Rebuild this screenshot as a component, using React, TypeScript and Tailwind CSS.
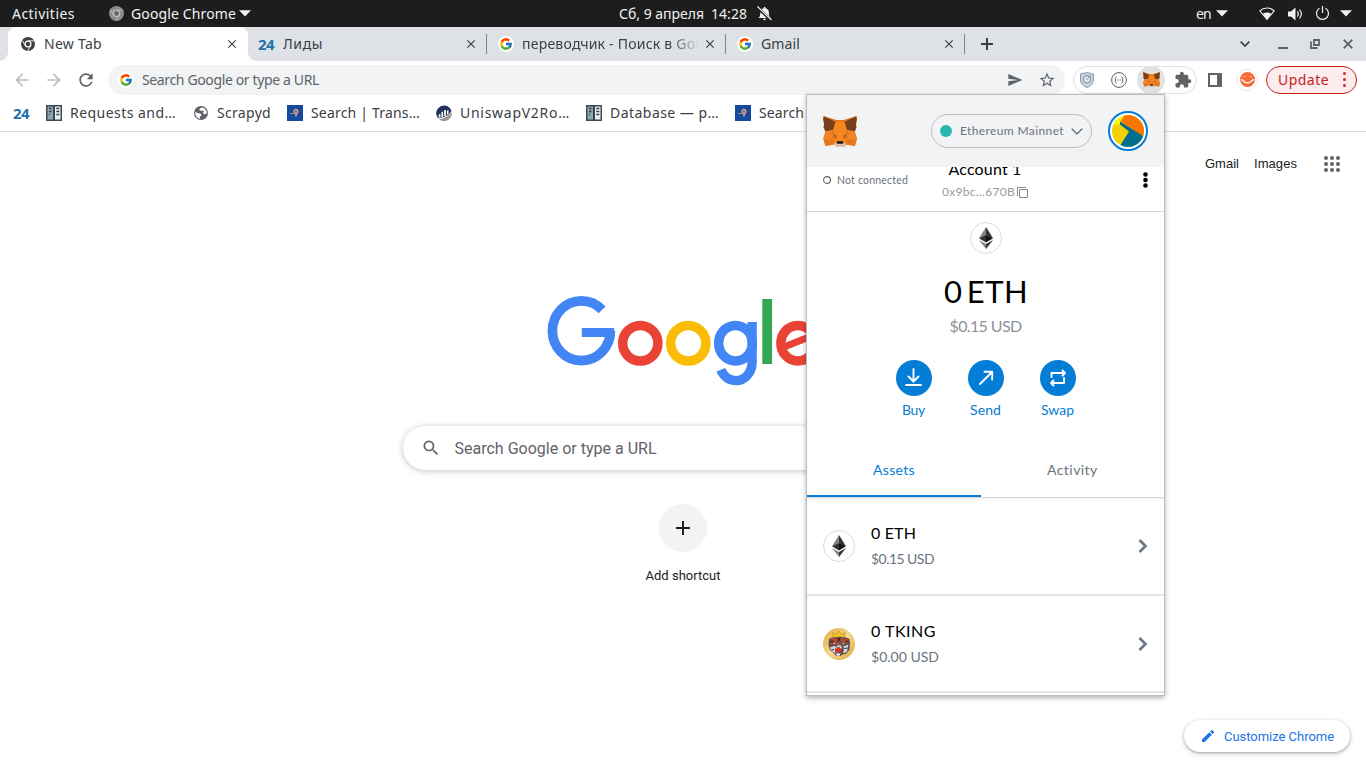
import { useLayoutEffect, useRef, useState } from "react";
import type { ReactNode } from "react";
import { FcGoogle } from "react-icons/fc";
import { MdArrowBack, MdArrowForward, MdClose, MdEdit, MdExtension, MdRefresh, MdSearch, MdSend, MdStarBorder } from "react-icons/md";

/* A single line of text, tracked so that it fills exactly `w` pixels. */
function Line({ w, className = "", children }: { w: number; className?: string; children: string }) {
  const ref = useRef<HTMLSpanElement>(null);
  const [spacing, setSpacing] = useState(0);
  useLayoutEffect(() => {
    if (!ref.current) return;
    const natural = ref.current.getBoundingClientRect().width;
    setSpacing((w - natural) / Math.max(1, children.length));
  }, []);
  return (
    <span className={`block shrink-0 whitespace-pre ${className}`} style={{ width: w }}>
      <span ref={ref} style={{ letterSpacing: spacing }}>{children}</span>
    </span>
  );
}

const Caret = () => (
  <svg width="12" height="7" viewBox="0 0 12 7" className="shrink-0"><path d="M0 .3h12L6 6.5z" fill="#f2f2f2" /></svg>
);

function ChromeMark({ size, ring, gap, core }: { size: number; ring: string; gap: string; core: string }) {
  return (
    <svg width={size} height={size} viewBox="0 0 16 16" className="shrink-0">
      <circle cx="8" cy="8" r="8" fill={ring} />
      <circle cx="8" cy="8" r="4" fill={gap} />
      <circle cx="8" cy="8" r="2.6" fill={core} />
      <path d="M8 4.4h7.2M4.9 9.9L1.3 3.7M11.1 9.8L7.5 16" stroke={gap} strokeWidth="1" />
    </svg>
  );
}

function Fox({ w, h }: { w: number; h: number }) {
  return (
    <svg width={w} height={h} viewBox="0 0 34 31" preserveAspectRatio="none" className="shrink-0">
      <path d="M.5 0L13 5h8L33.500 0l.5 3-1.500 11-.500 2 2 7-2 7-8.500-1.500-2.500 2.500h-7L11 28.500 2.500 30l-2-7 2-7-.5-2L0 3z" fill="#f6851b" />
      <path d="M.8.3L12.500 5.500 10 14l-7.500 1.500L.5 11.500 1.300 7 .2 4zM33.200.3L21.500 5.500 24 14l7.500 1.500 2-4L32.700 7l1.100-3z" fill="#763e1a" />
      <path d="M12.500 5.500L1 .3 13.500 4h7L33 .3 21.500 5.500z" fill="#e2761b" />
      <path d="M2.500 15.500L10 14l3.500 6-6 1.500L0 23zM31.500 15.500L24 14l-3.500 6 6 1.500L34 23z" fill="#f18526" />
      <path d="M10 14l-2.500 4 5 2zM24 14l2.500 4-5 2z" fill="#e0761c" />
      <path d="M.5 23.500L10 23l1 5.500L2.500 30zM33.500 23.500L24 23l-1 5.500 8.500 1.500z" fill="#e4761b" />
      <path d="M8.500 20l5.500.500-1.200 3-2.300-1.500zM25.500 20l-5.500.500 1.200 3 2.300-1.500z" fill="#d96c1b" />
      <path d="M10.500 19l2.800.5.200 1.200-2.200-.4zM23.500 19l-2.800.5-.2 1.200 2.200-.4z" fill="#6b5546" />
      <path d="M11 28l3-2h6l3 2-2.500 3h-7z" fill="#d7c1b3" />
      <path d="M14 25.200h6l.3 2.600h-6.600z" fill="#161616" />
    </svg>
  );
}

const Eth = () => (
  <span className="flex size-8 shrink-0 items-center justify-center rounded-full border border-[#d9dcdf] bg-white">
    <svg width="14" height="22" viewBox="0 0 14 22">
      <path d="M7 0L0 11.200 7 8.200z" fill="#828384" />
      <path d="M7 0v8.200l7 3z" fill="#343434" />
      <path d="M0 11.200l7-3.200v7.400z" fill="#2f3030" />
      <path d="M14 11.200L7 8v7.400z" fill="#131313" />
      <path d="M0 13l7 4.100V22z" fill="#828384" />
      <path d="M14 13l-7 4.100V22z" fill="#343434" />
    </svg>
  </span>
);

const Tiger = () => (
  <svg width="32" height="32" viewBox="0 0 32 32" className="shrink-0">
    <defs>
      <linearGradient id="gold" x1="0" y1="0" x2="1" y2="1">
        <stop offset="0" stopColor="#e3a63c" /><stop offset=".5" stopColor="#f6d994" /><stop offset="1" stopColor="#e2a237" />
      </linearGradient>
    </defs>
    <circle cx="16" cy="16" r="16" fill="url(#gold)" />
    <path d="M10.500 9.500L9.500 4.500l3.500 2 3-3.800L18.500 6.500l3.500-2-.5 5z" fill="#f2c21d" stroke="#a88022" strokeWidth=".5" />
    <path d="M6 11l3-1.500 7-.8 7 .8 3.500 1.500.5 5-.5 6-4 4-3 .5-2 1.500h-4l-2.500-2.500L7 22l-1.500-5z" fill="#5a5052" />
    <path d="M8 11l6-1.500-.5 4.500-5 1.500zM17.500 9.700l7.500 1.500-.5 4-4-.5-3-1.500zM7 16l3 1-1.500 2zM13.500 14.500h4.500l-1 3h-3z" fill="#c2462c" />
    <path d="M7 19.500l4-1.500 2 .5-1 2.500.5 4-3-1zM25.500 16.500l-5 2 .5 3-1 4 4-2zM14 17.500l3.500-.3 1.500 2h-5z" fill="#d6d6dc" />
    <path d="M10 15l3 .5-1.200 1zM22 15.500l-3 .2 1 1z" fill="#fdf3c8" />
    <path d="M12.500 20l6-.5-.5 4-3.500 1.500-2-2z" fill="#dc3324" />
    <path d="M12 19l1.200 2 .8-1.700zM18.800 19l-.8 2-1-1.700zM13 25.500l4.500-.3-1 2.500h-2.500z" fill="#f4f4f4" />
    <path d="M7 13.500l3.500-.5M25.500 13.500l-3.500-.3M14.500 10l1.500 2.500 1-2.500M24.500 20l-3 .5M9 22l2-.5" stroke="#2a2426" strokeWidth="1" fill="none" />
  </svg>
);

const Panels = () => (
  <svg width="16" height="16" viewBox="0 0 16 16" className="shrink-0">
    <path d="M0 0h16v16H0z" fill="#3c4a55" />
    <path d="M1.500 1.500h5.500v13H1.500z" fill="#8fa5b3" /><path d="M9 1.500h5.500v13H9z" fill="#e9eef1" />
    <path d="M3 3.500h2.500M3 6.500h2.500M3 9.500h1M10.300 3.500h3M10.300 6.500h3M10.300 9.500h3M7.800 0v16" stroke="#33414c" strokeWidth="1.300" />
  </svg>
);

const BlueMark = () => (
  <svg width="16" height="16" viewBox="0 0 16 16" className="shrink-0">
    <path d="M0 0h16v16H0z" fill="#154a9f" />
    <path d="M8.800 3.500a3 3 0 0 1 1.800 5.300L9 12.500 7.600 9a3 3 0 0 1 1.200-5.500z" fill="#c39a86" />
    <path d="M3 8.500h4" stroke="#a08a8f" /><circle cx="8.800" cy="6.500" r="1" fill="#705c78" />
  </svg>
);

const Globe = () => (
  <svg width="14" height="14" viewBox="0 0 14 14" className="shrink-0">
    <circle cx="7" cy="7" r="7" fill="#5f6368" />
    <path d="M8.300 1.500L6 2.300 5.300 4l1.500.8 2.200-.3 1 1.200-1.300 1.100 1.600 1.500L13 7.500C13 4.500 11 2.200 8.300 1.500zM1.200 6l3 1.200 2.300.3 1 1.700-1.400 1.300-.3 2.200C3 12.200 1 9.500 1.200 6z" fill="#fff" />
  </svg>
);

const Uniswap = () => (
  <svg width="16" height="16" viewBox="0 0 16 16" className="shrink-0">
    <path d="M1.500 12.500A7.800 7.800 0 1 1 15.500 6L13 9.500 8 12l-5 1.200z" fill="#21325b" />
    <path d="M3 14.200c5-.8 9.500-2.800 12.800-7C16.200 12 12.500 16 8 16c-2 0-3.700-.7-5-1.800z" fill="#979695" />
    <path d="M3.600 12.500V9.200M6.300 12V6.700M9 11V5M11.700 9.500V5.500" stroke="#fff" strokeWidth="1.700" />
  </svg>
);

const Bitrix = ({ className = "" }: { className?: string }) => (
  <Line w={16} className={`text-[15px] font-bold leading-5 text-[#1f70a8] ${className}`}>24</Line>
);

function Tab({ icon, title, w, fade = false }: { icon: ReactNode; title: string; w: number; fade?: boolean }) {
  return (
    <div className="flex h-[34px] w-[239px] shrink-0 items-center">
      <span className="ml-[10px] flex size-4 items-center justify-center">{icon}</span>
      <div className="ml-2 w-[175px] overflow-hidden">
        <Line w={w} className={fade ? "[mask-image:linear-gradient(90deg,black_147px,transparent_178px)]" : ""}>{title}</Line>
      </div>
      <MdClose className="ml-[6px] size-[14px] shrink-0 text-[#3c4043]" />
      <span className="ml-[8px] h-5 w-px bg-[#80868b]" />
    </div>
  );
}

const GFav = () => (
  <span className="flex size-4 shrink-0 items-center justify-center rounded-full bg-white"><FcGoogle size={14} /></span>
);

function TopBar() {
  return (
    <div className="flex h-[27px] items-center bg-[#1d1d1d] text-[14px] text-[#f2f2f2]">
      <Line w={63} className="ml-3">Activities</Line>
      <div className="ml-[34px]"><ChromeMark size={15} ring="#8b8b8b" gap="#bdbdbd" core="#666" /></div>
      <Line w={105} className="ml-[7px]">Google Chrome</Line>
      <span className="ml-[3px]"><Caret /></span>
      <Line w={85} className="ml-[368px]">Сб, 9 апреля</Line>
      <Line w={36} className="ml-[7px]">14:28</Line>
      <svg width="15" height="15" viewBox="0 0 15 15" className="ml-[10px] shrink-0">
        <path d="M1.500 12c2-1.500 1.500-3.500 2-6C4 3.500 5.500 2.500 6.500 2.200 6.500.5 8.800.5 8.800 2.200c2 .6 3 2.300 3.100 4.300.2 2.500 0 4 2 5.500zM6 12.800h3c0 1.800-3 1.800-3 0z" fill="#f2f2f2" />
        <path d="M.5 1.500l14 13" stroke="#1d1d1d" strokeWidth="3" /><path d="M.5.5l14 13.500" stroke="#f2f2f2" strokeWidth="1.200" />
      </svg>
      <Line w={15} className="ml-[424px]">en</Line>
      <span className="ml-[5px]"><Caret /></span>
      <svg width="16" height="14" viewBox="0 0 16 14" className="ml-[31px] shrink-0">
        <path d="M.8 3.800C5 0 11 0 15.200 3.800L8 12.500z" fill="none" stroke="#f2f2f2" strokeWidth="1.100" />
        <path d="M3.800 6.700c2.600-1.500 5.800-1.500 8.400 0L8 12.500z" fill="#f2f2f2" />
      </svg>
      <svg width="15" height="14" viewBox="0 0 15 14" className="ml-[13px] shrink-0">
        <path d="M0 4.500h3L7.500.500v13L3 9.500H0z" fill="#f2f2f2" />
        <path d="M9.300 4.300q2 2.700 0 5.400M11.500 2.500q3.600 4.500 0 9" fill="none" stroke="#f2f2f2" strokeWidth="1.200" />
      </svg>
      <svg width="15" height="15" viewBox="0 0 15 15" className="ml-[12px] shrink-0">
        <path d="M4.500 2.200a6 6 0 1 0 6 0M7.500 0v7" fill="none" stroke="#f2f2f2" strokeWidth="1.200" />
      </svg>
      <span className="ml-[10px]"><Caret /></span>
    </div>
  );
}

function TabStrip() {
  return (
    <div className="flex h-[34px] items-center bg-[#dee1e6] text-[14px] text-[#3c4043]">
      <span className="size-2 self-end bg-[radial-gradient(circle_at_0_0,transparent_7.5px,white_8px)]" />
      <div className="flex h-[34px] w-60 shrink-0 items-center rounded-t-lg bg-white">
        <span className="ml-[13px]"><ChromeMark size={14} ring="#3c4043" gap="#fff" core="#3c4043" /></span>
        <Line w={58} className="ml-[9px]">New Tab</Line>
        <MdClose className="ml-[123px] size-[14px]" />
      </div>
      <span className="size-2 shrink-0 self-end bg-[radial-gradient(circle_at_100%_0,transparent_7.5px,white_8px)]" />
      <div className="-ml-[7px] flex">
        <Tab icon={<Bitrix className="-ml-[2px]" />} title="Лиды" w={40} />
        <Tab icon={<GFav />} title="переводчик - Поиск в Google" w={203} fade />
        <Tab icon={<GFav />} title="Gmail" w={39} />
      </div>
      <svg width="12" height="12" viewBox="0 0 12 12" className="ml-[15px] shrink-0"><path d="M6 0v12M0 6h12" stroke="#3c4043" strokeWidth="2" /></svg>
      <svg width="10" height="6" viewBox="0 0 10 6" className="ml-[247px] shrink-0"><path d="M.7.7L5 5 9.300.7" fill="none" stroke="#3c4043" strokeWidth="1.700" /></svg>
      <span className="ml-[28px] mt-2 h-[2px] w-[10px] shrink-0 bg-[#5f6368]" />
      <svg width="10" height="10" viewBox="0 0 10 10" className="ml-[22px] shrink-0"><path d="M4 1h5v5H4zM1 2.500V9h6.500" fill="none" stroke="#5f6368" strokeWidth="1.800" /></svg>
      <svg width="10" height="10" viewBox="0 0 10 10" className="ml-[23px] shrink-0"><path d="M.7.7l8.600 8.600M9.300.7L.7 9.300" stroke="#5f6368" strokeWidth="1.900" /></svg>
    </div>
  );
}

function Toolbar() {
  return (
    <div className="flex h-[37px] items-center bg-white text-[14px]">
      <MdArrowBack className="ml-3 size-5 shrink-0 text-[#babcbe]" />
      <MdArrowForward className="ml-3 size-5 shrink-0 text-[#babcbe]" />
      <MdRefresh className="ml-3 size-5 shrink-0 text-[#5f6368]" />
      <div className="ml-3 flex h-[30px] w-[957px] shrink-0 items-center rounded-full bg-[#f1f3f4]">
        <span className="ml-[10px]"><GFav /></span>
        <Line w={177} className="ml-2 text-[#5f6368]">Search Google or type a URL</Line>
        <MdSend className="ml-[688px] size-4 shrink-0 text-[#5f6368]" />
        <MdStarBorder className="ml-[15px] size-[18px] shrink-0 text-[#5f6368]" />
      </div>
      <div className="ml-2 flex h-7 w-[124px] shrink-0 items-center rounded-full border border-[#dfe1e4]">
        <svg width="14" height="16" viewBox="0 0 14 16" className="ml-[6px] shrink-0">
          <path d="M7 .5L13.500 2v6c0 4-3 6.300-6.500 7.500C3.500 14.300.5 12 .5 8V2z" fill="#c9cfdc" stroke="#929db5" />
          <circle cx="7" cy="7.300" r="3.500" fill="#eef1f6" stroke="#8997b5" strokeWidth="1.200" /><circle cx="7" cy="7.300" r="1.300" fill="#b5bfd1" /><path d="M8 6.300L11 3.500" stroke="#8997b5" />
        </svg>
        <svg width="16" height="16" viewBox="0 0 16 16" className="ml-[17px] shrink-0">
          <circle cx="8" cy="8" r="7.400" fill="#fff" stroke="#5b5b5b" />
          <path d="M5.600 4.900c-1.200 0-1 .9-1 1.800 0 .8-.3 1.300-.9 1.300.6 0 .9.500.9 1.300 0 .9-.2 1.800 1 1.800M10.400 4.900c1.200 0 1 .9 1 1.800 0 .8.3 1.300.9 1.300-.6 0-.9.500-.9 1.300 0 .9.2 1.800-1 1.800" fill="none" stroke="#5b5b5b" strokeWidth=".9" />
          <path d="M6 8h.9M7.600 8h.9M9.200 8h.9" stroke="#5b5b5b" strokeWidth=".9" />
        </svg>
        <span className="ml-[10px] flex size-7 shrink-0 items-center justify-center rounded-full bg-[#dfe1e3]"><Fox w={17} h={15} /></span>
        <MdExtension className="ml-[9px] size-[18px] shrink-0 text-[#5f6368]" />
      </div>
      <svg width="14" height="14" viewBox="0 0 14 14" className="ml-[11px] shrink-0"><path d="M1 1h12v12H1z" fill="#fff" stroke="#5f6368" strokeWidth="2" /><path d="M9 1h4v12H9z" fill="#5f6368" /></svg>
      <span className="ml-[14px] flex size-[22px] shrink-0 items-center justify-center rounded-full border border-[#e6e8ea] bg-white">
        <svg width="15" height="15" viewBox="0 0 15 15">
          <circle cx="7.500" cy="7.500" r="7.500" fill="#f96a38" />
          <path d="M.8 7.500l2 .8c2.500 3.300 6.900 3.300 9.400 0l2-.8" fill="none" stroke="#fff" strokeWidth="1.300" /><path d="M3 5c1-.9 2-.9 3 0M9 5c1-.9 2-.9 3 0" fill="none" stroke="#fde0d5" strokeWidth=".7" />
        </svg>
      </span>
      <div className="ml-2 flex h-7 w-[91px] shrink-0 items-center rounded-full border border-[#c5221f] bg-[#fceced] text-[#c5221f]">
        <Line w={51} className="ml-[11px]">Update</Line>
        <svg width="3" height="15" viewBox="0 0 3 15" className="ml-[14px] shrink-0"><circle cx="1.500" cy="1.500" r="1.500" fill="#d32a24" /><circle cx="1.500" cy="7.500" r="1.500" fill="#d32a24" /><circle cx="1.500" cy="13.500" r="1.500" fill="#d32a24" /></svg>
      </div>
    </div>
  );
}

function Bookmarks() {
  return (
    <div className="flex h-[34px] items-center overflow-hidden border-b border-[#dadce0] bg-white pb-[3px] text-[14px] text-[#3c4043]">
      <Bitrix className="-mt-px ml-[13px]" />
      <span className="ml-[17px]"><Panels /></span>
      <Line w={106} className="ml-2">Requests and…</Line>
      <span className="ml-[18px]"><Globe /></span>
      <Line w={54} className="ml-[9px]">Scrapyd</Line>
      <span className="ml-4"><BlueMark /></span>
      <Line w={109} className="ml-2">Search | Trans…</Line>
      <span className="ml-[16px]"><Uniswap /></span>
      <Line w={110} className="ml-2">UniswapV2Ro…</Line>
      <span className="ml-[16px]"><Panels /></span>
      <Line w={109} className="ml-2">Database — p…</Line>
      <span className="ml-[16px]"><BlueMark /></span>
      <Line w={45} className="ml-2">Search</Line>
    </div>
  );
}

const Logo = () => (
  <svg width="280" height="100" viewBox="543.200 290 280 100" fill="none" role="img" aria-label="Google" className="mt-[94px]">
    <ellipse cx="581.600" cy="330.800" rx="29" ry="29.900" stroke="#4285f4" strokeWidth="9.700" pathLength="360" strokeDasharray="315 45" />
    <rect x="582" y="328" width="32.300" height="9" fill="#4285f4" />
    <ellipse cx="640.500" cy="343.200" rx="17.600" ry="17.800" stroke="#ea4335" strokeWidth="9.500" />
    <ellipse cx="688.500" cy="343.200" rx="17.600" ry="17.800" stroke="#fbbc05" strokeWidth="9.500" />
    <ellipse cx="735.700" cy="343.200" rx="16.800" ry="17.800" stroke="#4285f4" strokeWidth="9.500" />
    <rect x="747.700" y="322" width="9.300" height="41" fill="#4285f4" />
    <ellipse cx="736" cy="362.500" rx="16.300" ry="18.100" stroke="#4285f4" strokeWidth="9.400" pathLength="360" strokeDasharray="155 205" />
    <rect x="762.500" y="299" width="9.800" height="65" fill="#34a853" />
    <ellipse cx="798" cy="343.200" rx="16.900" ry="17.800" stroke="#ea4335" strokeWidth="9.500" pathLength="360" strokeDasharray="300 28 32" strokeDashoffset="-32" />
    <line x1="783" y1="347.500" x2="818" y2="333.500" stroke="#ea4335" strokeWidth="7" />
  </svg>
);

function NewTabPage() {
  return (
    <div className="flex h-[636px] flex-col items-center bg-white font-[Roboto,sans-serif]">
      <div className="flex h-16 w-full items-center justify-end pr-[26px] font-['Liberation_Sans',sans-serif] text-[13px] text-[#202124]">
        <Line w={34}>Gmail</Line>
        <Line w={43} className="ml-[15px]">Images</Line>
        <svg width="16" height="16" viewBox="0 0 16 16" className="ml-[27px]" fill="#5f6368">
          {[2, 8, 14].map((y) => [2, 8, 14].map((x) => <circle key={`${x}-${y}`} cx={x} cy={y} r="2" />))}
        </svg>
      </div>
      <Logo />
      <div className="mt-9 flex h-11 w-[561px] items-center rounded-full bg-white shadow-[0_1px_6px_0_rgba(32,33,36,.28)]">
        <MdSearch className="ml-[18px] size-5 text-[#5f6368]" />
        <Line w={202} className="ml-[14px] pt-[2px] text-[16px] text-[#5f6368]">Search Google or type a URL</Line>
      </div>
      <div className="mt-[34px] flex size-12 items-center justify-center rounded-full bg-[#f1f3f4]">
        <svg width="14" height="14" viewBox="0 0 14 14"><path d="M7 0v14M0 7h14" stroke="#202124" strokeWidth="2" /></svg>
      </div>
      <Line w={75} className="mt-[14px] text-[13px] leading-[20px] text-[#202124]">Add shortcut</Line>
    </div>
  );
}

function Action({ label, w, children }: { label: string; w: number; children: ReactNode }) {
  return (
    <div className="flex w-[72px] flex-col items-center">
      <span className="flex size-9 items-center justify-center rounded-full bg-[#037dd6]">
        <svg width="20" height="20" viewBox="0 0 20 20" fill="none" stroke="#fff" strokeWidth="1.900" strokeLinecap="round" strokeLinejoin="round">{children}</svg>
      </span>
      <Line w={w} className="mr-px mt-1 text-[14px] leading-5 text-[#037dd6]">{label}</Line>
    </div>
  );
}

function Asset({ icon, name, nw, usd, uw, className, textClass }: { icon: ReactNode; name: string; nw: number; usd: string; uw: number; className: string; textClass: string }) {
  return (
    <div className={`flex shrink-0 items-center border-b-2 border-[#e4e4e4] px-4 ${className}`}>
      {icon}
      <div className={`ml-4 grow ${textClass}`}>
        <Line w={nw} className="text-[16px] leading-6 text-black">{name}</Line>
        <Line w={uw} className="mt-1 text-[14px] leading-5 text-[#6a737d]">{usd}</Line>
      </div>
      <svg width="10" height="14" viewBox="0 0 10 14"><path d="M1.500 1l6 6-6 6" fill="none" stroke="#6a7681" strokeWidth="2.600" /></svg>
    </div>
  );
}

function Wallet() {
  return (
    <div className="absolute left-[806px] top-[94px] flex h-[602px] w-[359px] flex-col overflow-hidden border border-[#b9bbbe] bg-white font-[Lato,sans-serif] shadow-[0_2px_5px_rgba(0,0,0,.3)]">
      <div className="flex h-[72px] shrink-0 items-center bg-[#f2f3f4] px-4">
        <Fox w={34} h={31} />
        <div className="ml-[74px] flex h-[34px] w-[161px] shrink-0 items-center rounded-full border border-[#bbc0c5]">
          <span className="ml-2 size-3 rounded-full bg-[#29b6af]" />
          <Line w={104} className="ml-2 text-[12px] leading-4 text-[#6a737d]">Ethereum Mainnet</Line>
          <svg width="12" height="7" viewBox="0 0 12 7" className="ml-[7px]"><path d="M.7.7L6 6 11.300.7" fill="none" stroke="#535a61" strokeWidth="1.200" /></svg>
        </div>
        <span className="ml-4 flex size-10 shrink-0 items-center justify-center rounded-full border-2 border-[#037dd6] bg-white">
          <svg width="32" height="32" viewBox="0 0 32 32">
            <defs><clipPath id="disc"><circle cx="16" cy="16" r="16" /></clipPath></defs>
            <g clipPath="url(#disc)">
              <path d="M0 0h32v32H0z" fill="#f3d104" />
              <path d="M0 0h16l-5 9-9 1z" fill="#fbf80b" />
              <path d="M13-1h20v23.500L8.500 6.500z" fill="#fb7602" />
              <path d="M8 6.500L33 22v11H6.500L17 16.500 8 9.500z" fill="#016d8d" />
            </g>
          </svg>
        </span>
      </div>
      <div className="flex h-[45px] shrink-0 items-start overflow-hidden border-b border-[#d6d9dc] px-4">
        <svg width="8" height="8" viewBox="0 0 8 8" className="mt-[9px]"><circle cx="4" cy="4" r="3.400" fill="none" stroke="#535a61" strokeWidth="1.100" /></svg>
        <Line w={71} className="ml-[6px] mt-[5px] text-[10.5px] leading-4 text-[#6a737d]">Not connected</Line>
        <div className="-mt-[10px] ml-[34px] flex w-[86px] shrink-0 flex-col items-center">
          <Line w={73} className="text-[16px] leading-6 text-black">Account 1</Line>
          <div className="mt-[3px] flex items-center">
            <Line w={73} className="text-[12px] leading-4 text-[#989a9c]">0x9bc...670B</Line>
            <svg width="11" height="11" viewBox="0 0 11 11" className="ml-[2px]"><path d="M2.500 2.500h8v8h-8zM.5 9V.5H9" fill="none" stroke="#86898c" /></svg>
          </div>
        </div>
        <svg width="5" height="16" viewBox="0 0 5 16" className="ml-auto mt-[5px]"><circle cx="2.500" cy="2.500" r="2.300" /><circle cx="2.500" cy="8" r="2.300" /><circle cx="2.500" cy="13.500" r="2.300" /></svg>
      </div>
      <div className="flex h-[231px] shrink-0 flex-col items-center pl-[1px] pt-[10px]">
        <Eth />
        <Line w={84} className="mt-[17px] text-[31px] leading-10 text-black [word-spacing:-4px]">0 ETH</Line>
        <Line w={72} className="mr-px mt-[3px] text-[16px] leading-6 text-[#8b929a]">$0.15 USD</Line>
        <div className="mt-[22px] flex">
          <Action label="Buy" w={23}><path d="M9.500 1v12M4.500 8.500l5 5 5-5M2 17h15" /></Action>
          <Action label="Send" w={31}><path d="M4 16L16 4M8.500 3.800h7.700v7.700" /></Action>
          <Action label="Swap" w={33}><path d="M3.500 9V5H16M14.500 2.500L17 5l-2.500 2.500M16 10v5H4M5.500 12.500L3 15l2.500 2.500" /></Action>
        </div>
      </div>
      <div className="flex h-[55px] shrink-0 border-b border-[#d6d9dc] text-[14px] leading-5 shadow-[0_2px_3px_rgba(0,0,0,.05)]">
        <div className="flex w-[174px] justify-center border-b-2 border-[#037dd6] pt-[17px] text-[#037dd6]"><Line w={42}>Assets</Line></div>
        <div className="flex grow justify-center pt-[17px] text-[#6a737d]"><Line w={51}>Activity</Line></div>
      </div>
      <Asset icon={<Eth />} name="0 ETH" nw={45} usd="$0.15 USD" uw={63} className="h-[98px]" textClass="pb-[3px]" />
      <Asset icon={<Tiger />} name="0 TKING" nw={65} usd="$0.00 USD" uw={68} className="h-[97px]" textClass="pb-[1px]" />
    </div>
  );
}

export default function App() {
  return (
    <div className="relative h-[768px] w-[1366px] overflow-hidden bg-white font-['Noto_Sans',sans-serif] leading-5">
      <TopBar />
      <TabStrip />
      <Toolbar />
      <Bookmarks />
      <NewTabPage />
      <button className="absolute bottom-4 right-4 flex h-8 w-[166px] items-center rounded-full bg-white font-[Roboto,sans-serif] text-[13px] text-[#1a73e8] shadow-[0_1px_3px_rgba(0,0,0,.3),0_2px_6px_rgba(0,0,0,.12)]">
        <MdEdit className="ml-4 size-4" />
        <Line w={110} className="ml-2 pt-[2px] text-left">Customize Chrome</Line>
      </button>
      <Wallet />
    </div>
  );
}
